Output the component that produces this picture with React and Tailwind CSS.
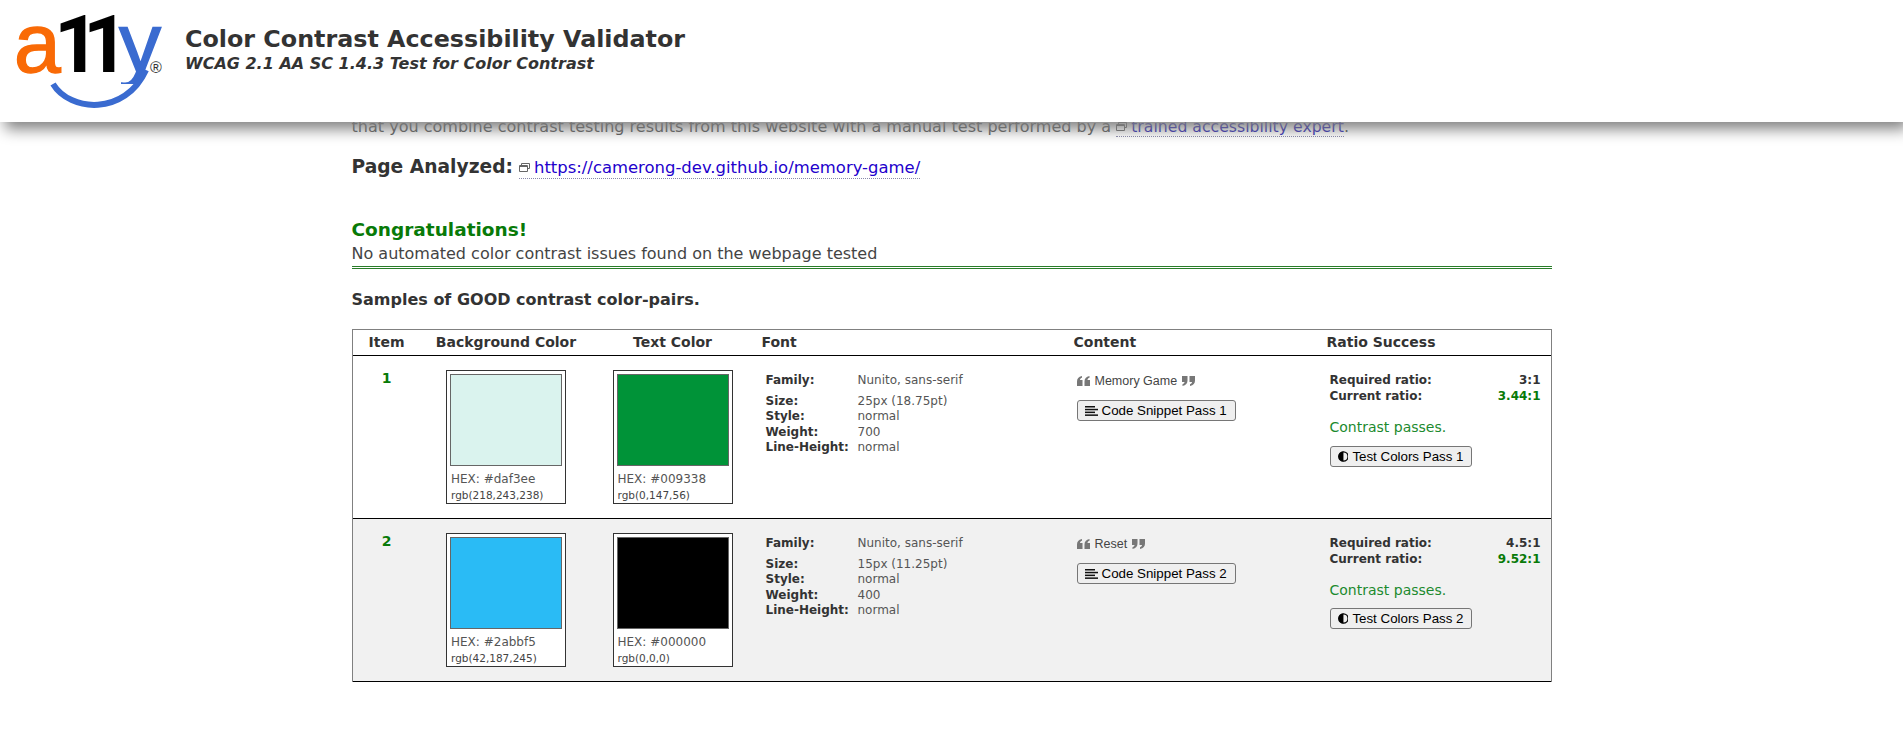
import React from 'react';

const verdana = 'font-["DejaVu_Sans",Verdana,sans-serif]';

const samples = [
  {
    id: 1,
    bg: { hex: '#daf3ee', rgb: 'rgb(218,243,238)' },
    fg: { hex: '#009338', rgb: 'rgb(0,147,56)' },
    size: '25px (18.75pt)',
    weight: '700',
    content: 'Memory Game',
    required: '3:1',
    current: '3.44:1',
  },
  {
    id: 2,
    bg: { hex: '#2abbf5', rgb: 'rgb(42,187,245)' },
    fg: { hex: '#000000', rgb: 'rgb(0,0,0)' },
    size: '15px (11.25pt)',
    weight: '400',
    content: 'Reset',
    required: '4.5:1',
    current: '9.52:1',
  },
];

// a11y logo: real text plus the blue smile
const Logo = () => (
  <svg width="170" height="112" viewBox="0 0 170 112" className="shrink-0">
    <defs>
      <clipPath id="ycut">
        <rect x="110" y="20" width="60" height="64" />
      </clipPath>
    </defs>
    <text x="14" y="72" fontFamily="Liberation Sans" fontSize="84" fill="#f96a06" stroke="#f96a06" strokeWidth="1.5">a</text>
    <text x="54" y="72" fontFamily="Roboto" fontWeight="700" fontSize="80" letterSpacing="-17" fill="#000">11</text>
    <text x="119" y="72" fontFamily="Liberation Sans" fontSize="84" fill="#3a6bd0" stroke="#3a6bd0" strokeWidth="1.5" clipPath="url(#ycut)">y</text>
    <path d="M53 84 C70 112 125 116 146 70" fill="none" stroke="#3a6bd0" strokeWidth="6" />
    <text x="150" y="73" fontFamily="Liberation Sans" fontSize="16" fill="#333">®</text>
  </svg>
);

// little "opens in new window" mark
const WindowIcon = () => (
  <svg width="11" height="9" viewBox="0 0 11 9" className="inline-block mr-[4px] align-[1px]" fill="none" stroke="#666" strokeWidth="1">
    <path d="M2.5 2.5V.5h8v5h-2" />
    <path d="M.5 2.5h8v6h-8z" />
    <path d="M.5 3.5h8" />
  </svg>
);

const QuoteLeft = () => (
  <svg width="13" height="10" viewBox="0 0 13 10" fill="#777">
    <path d="M0 5.5C0 2.5 1.5.7 5 0v1.8C3.6 2.2 3 3 3 4h2.5v6H0zM7.5 5.5C7.5 2.5 9 .7 12.5 0v1.8c-1.4.4-2 1.2-2 2.2H13v6H7.5z" />
  </svg>
);

const QuoteRight = () => (
  <svg width="13" height="10" viewBox="0 0 13 10" fill="#777" className="rotate-180">
    <path d="M0 5.5C0 2.5 1.5.7 5 0v1.8C3.6 2.2 3 3 3 4h2.5v6H0zM7.5 5.5C7.5 2.5 9 .7 12.5 0v1.8c-1.4.4-2 1.2-2 2.2H13v6H7.5z" />
  </svg>
);

const LinesIcon = () => (
  <svg width="13" height="10" viewBox="0 0 13 10" fill="#111">
    <rect x="0" y="0" width="10" height="1.5" />
    <rect x="0" y="2.8" width="13" height="1.5" />
    <rect x="0" y="5.6" width="10" height="1.5" />
    <rect x="0" y="8.4" width="13" height="1.5" />
  </svg>
);

const AdjustIcon = () => (
  <svg width="11" height="11" viewBox="0 0 11 11">
    <circle cx="5.5" cy="5.5" r="4.7" fill="none" stroke="#000" strokeWidth="1.4" />
    <path d="M5.5 .5a5 5 0 0 0 0 10z" fill="#000" />
  </svg>
);

const Button = ({ icon, children, className }) => (
  <button className={`flex items-center gap-[4px] h-[21px] px-[7px] whitespace-nowrap border border-[#767676] rounded-[3px] bg-[#efefef] text-[13.33px] text-black font-["Liberation_Sans",Arial,sans-serif] ${className}`}>
    {icon}
    {children}
  </button>
);

const Swatch = ({ color }) => (
  <div className="w-[120px] h-[134px] border border-[#333] bg-white p-[3px]">
    <div className="h-[92px] border border-[#666]" style={{ backgroundColor: color.hex }} />
    <div className="mt-[5px] pl-[1px] text-[12px] leading-[16px] text-[#555]">HEX: {color.hex}</div>
    <div className="pl-[1px] text-[10.5px] leading-[16px] text-[#444]">{color.rgb}</div>
  </div>
);

const FontRow = ({ label, value, className = '' }) => (
  <div className={`flex h-[15.3px] items-center ${className}`}>
    <div className="w-[92px] font-bold text-[#333]">{label}</div>
    <div className="text-[#555]">{value}</div>
  </div>
);

const SampleRow = ({ sample, shaded }) => (
  <div className={`flex h-[163px] border-b border-black ${shaded ? 'bg-[#f1f1f1]' : 'bg-white'}`}>
    <div className="w-[68px] pt-[12px] text-center text-[14px] font-bold text-[#087a08]">{sample.id}</div>
    <div className="w-[171px] pt-[14px] flex justify-center">
      <Swatch color={sample.bg} />
    </div>
    <div className="w-[162px] pt-[14px] flex justify-center">
      <Swatch color={sample.fg} />
    </div>
    <div className="w-[323px] pl-[12px] pt-[16px] text-[12px]">
      <FontRow label="Family:" value="Nunito, sans-serif" className="mb-[6px]" />
      <FontRow label="Size:" value={sample.size} />
      <FontRow label="Style:" value="normal" />
      <FontRow label="Weight:" value={sample.weight} />
      <FontRow label="Line-Height:" value="normal" />
    </div>
    <div className="w-[253px] pt-[18px]">
      <div className="flex items-center gap-[5px] h-[14px] text-[12.5px] text-[#444] font-['Liberation_Sans',Arial,sans-serif]">
        <QuoteLeft />
        {sample.content}
        <QuoteRight />
      </div>
      <Button icon={<LinesIcon />} className="mt-[12px] w-[159px]">Code Snippet Pass {sample.id}</Button>
    </div>
    <div className="flex-1 pt-[16px] pr-[10px]">
      <div className="flex justify-between text-[12px] leading-[16px] font-bold text-[#333]">
        <span>Required ratio:</span>
        <span>{sample.required}</span>
      </div>
      <div className="flex justify-between text-[12px] leading-[16px] font-bold text-[#333]">
        <span>Current ratio:</span>
        <span className="text-[#087a08]">{sample.current}</span>
      </div>
      <div className="mt-[13px] text-[14px] leading-[20px] text-[#1c8a2e]">Contrast passes.</div>
      <Button icon={<AdjustIcon />} className={`${shaded ? 'mt-[8px]' : 'mt-[9px]'} w-[142px]`}>Test Colors Pass {sample.id}</Button>
    </div>
  </div>
);

export default function App() {
  return (
    <div className={`relative h-[745px] overflow-hidden bg-white ${verdana}`}>
      {/* fixed header sits over the scrolled page */}
      <header className="absolute top-0 left-0 right-0 z-10 h-[122px] bg-white shadow-[5px_7px_14px_#808080] flex items-start">
        <Logo />
        <div className="ml-[15px] pt-[25px]">
          <h1 className="text-[23.8px] leading-[29px] font-bold text-[#333]">Color Contrast Accessibility Validator</h1>
          <p className="text-[16px] leading-[20px] font-bold italic text-[#333]">WCAG 2.1 AA SC 1.4.3 Test for Color Contrast</p>
        </div>
      </header>

      <main className="w-[1200px] mx-auto pt-[117px]">
        <p className="text-[16.05px] leading-[20px] text-[#555] whitespace-nowrap">
          that you combine contrast testing results from this website with a manual test performed by a{' '}
          <a className="text-[15.7px] text-[#2a1fb5] border-b border-dotted border-[#88a]"><WindowIcon />trained accessibility expert</a>.
        </p>

        <div className="mt-[18px] flex items-baseline gap-[6px]">
          <h2 className="text-[18.67px] leading-[24px] font-bold text-[#333]">Page Analyzed:</h2>
          <a className="text-[16.46px] leading-[20px] text-[#2200cc] border-b border-dotted border-[#88a]"><WindowIcon />https://camerong-dev.github.io/memory-game/</a>
        </div>

        <h2 className="mt-[36px] text-[18.5px] leading-[29px] font-bold text-[#087a08]">Congratulations!</h2>
        <p className="text-[16px] leading-[20px] text-[#444]">No automated color contrast issues found on the webpage tested</p>
        <div className="mt-[2px] h-[3px] border-y border-[#2a7d2a]" />

        <h3 className="mt-[21px] text-[16px] leading-[20px] font-bold text-[#333]">Samples of GOOD contrast color-pairs.</h3>

        <section className="mt-[19px] border-x border-t border-[#808080]">
          <div className="flex h-[26px] items-center border-b border-black text-[14px] font-bold text-[#333]">
            <div className="w-[68px] text-center">Item</div>
            <div className="w-[171px] text-center">Background Color</div>
            <div className="w-[162px] text-center">Text Color</div>
            <div className="w-[312px] pl-[8px]">Font</div>
            <div className="w-[253px] pl-[8px]">Content</div>
            <div className="flex-1 pl-[8px]">Ratio Success</div>
          </div>
          {samples.map((s, i) => (
            <SampleRow key={s.id} sample={s} shaded={i % 2 === 1} />
          ))}
        </section>
      </main>
    </div>
  );
}
